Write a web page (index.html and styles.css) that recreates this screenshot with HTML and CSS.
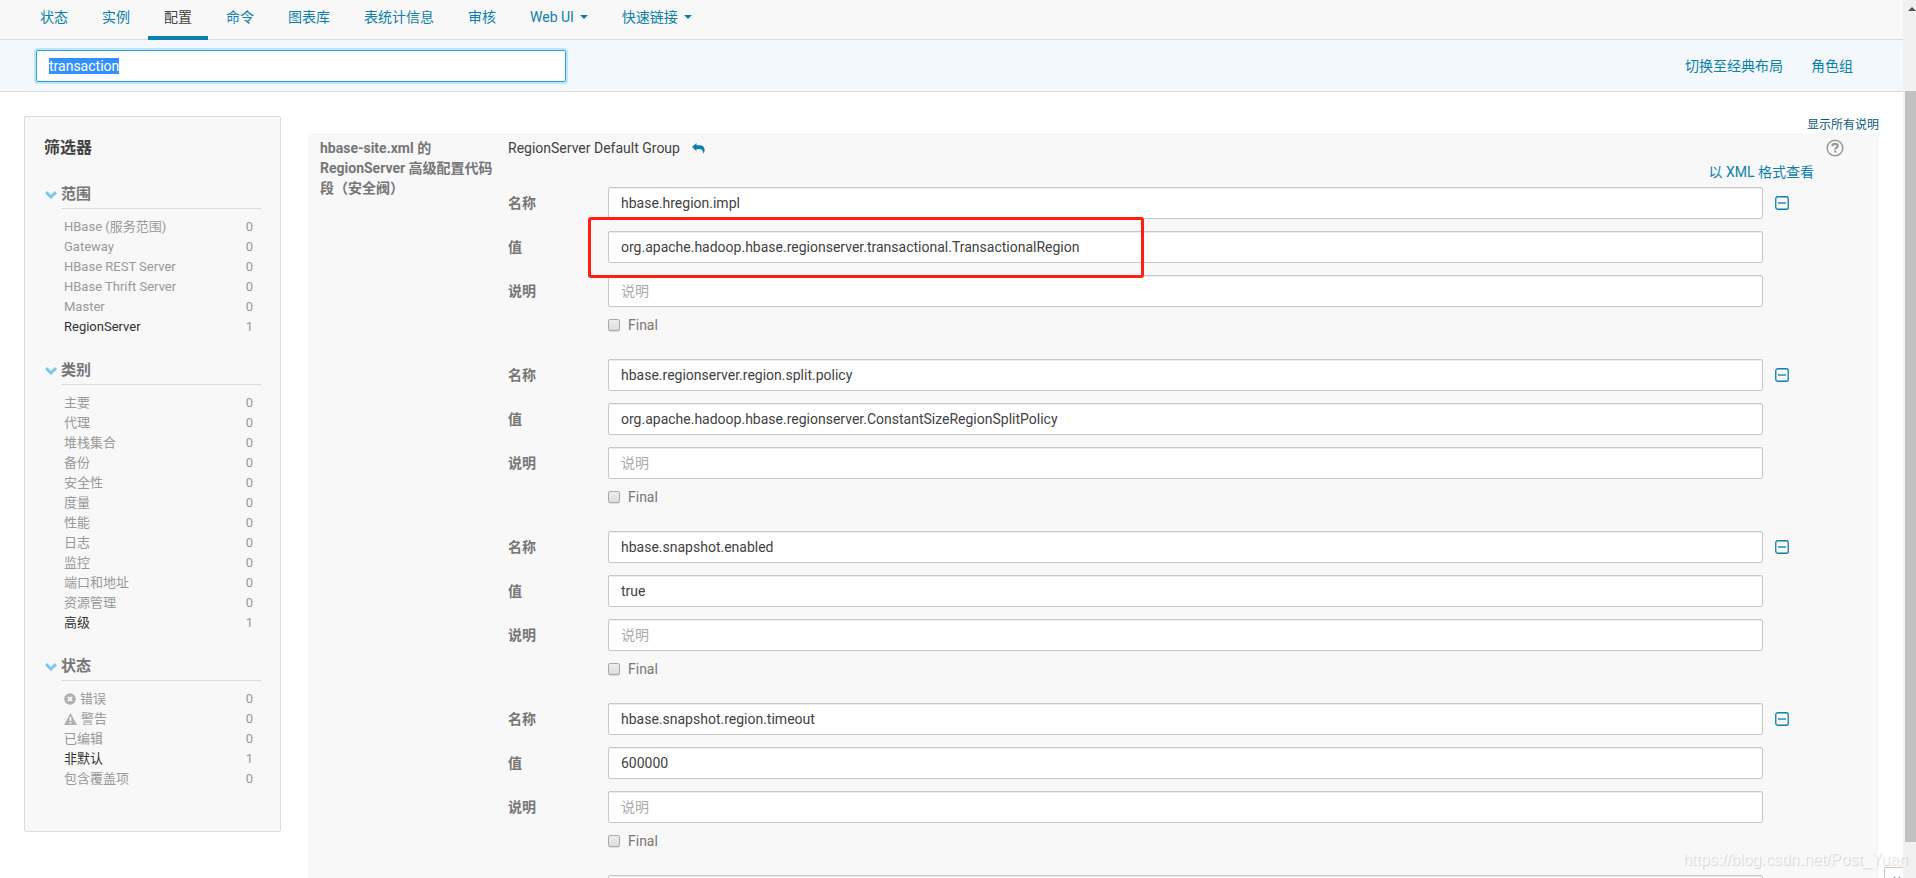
FILE: index.html
```html
<!DOCTYPE html>
<html lang="zh-CN">
<head>
<meta charset="utf-8">
<title>HBase 配置</title>
<link rel="stylesheet" href="styles.css">
</head>
<body>
<svg class="defs" aria-hidden="true">
  <symbol id="chevron" viewBox="0 0 12 8"><path d="M1 1.200 6 6 11 1.200" fill="none" stroke="#7cc7ea" stroke-width="3"/></symbol>
  <symbol id="minus" viewBox="0 0 14 14"><rect x=".75" y=".75" width="12.500" height="12.500" rx="2" fill="none" stroke="#0b7fad" stroke-width="1.300"/><path d="M3 7h8" stroke="#0b7fad" stroke-width="1.300"/></symbol>
</svg>
<div class="page">
  <div class="view">
    <nav class="tabs">
      <a href="#">状态</a>
      <a href="#">实例</a>
      <a href="#" class="active">配置</a>
      <a href="#">命令</a>
      <a href="#">图表库</a>
      <a href="#">表统计信息</a>
      <a href="#">审核</a>
      <a href="#">Web UI<span class="caret"></span></a>
      <a href="#">快速链接<span class="caret"></span></a>
    </nav>
    <div class="searchbar">
      <div class="search">
        <input id="q" class="search-input" type="text" value="transaction" aria-label="搜索">
      </div>
      <div class="links">
        <a href="#">切换至经典布局</a>
        <a href="#">角色组</a>
      </div>
    </div>
    <main class="content">
      <aside class="filters">
        <h2>筛选器</h2>
        <section>
          <h3><svg class="chev"><use href="#chevron"/></svg><span>范围</span></h3>
          <ul>
            <li><span>HBase (服务范围)</span><b>0</b></li>
            <li><span>Gateway</span><b>0</b></li>
            <li><span>HBase REST Server</span><b>0</b></li>
            <li><span>HBase Thrift Server</span><b>0</b></li>
            <li><span>Master</span><b>0</b></li>
            <li class="on"><span>RegionServer</span><b>1</b></li>
          </ul>
        </section>
        <section>
          <h3><svg class="chev"><use href="#chevron"/></svg><span>类别</span></h3>
          <ul>
            <li><span>主要</span><b>0</b></li>
            <li><span>代理</span><b>0</b></li>
            <li><span>堆栈集合</span><b>0</b></li>
            <li><span>备份</span><b>0</b></li>
            <li><span>安全性</span><b>0</b></li>
            <li><span>度量</span><b>0</b></li>
            <li><span>性能</span><b>0</b></li>
            <li><span>日志</span><b>0</b></li>
            <li><span>监控</span><b>0</b></li>
            <li><span>端口和地址</span><b>0</b></li>
            <li><span>资源管理</span><b>0</b></li>
            <li class="on"><span>高级</span><b>1</b></li>
          </ul>
        </section>
        <section>
          <h3><svg class="chev"><use href="#chevron"/></svg><span>状态</span></h3>
          <ul>
            <li><span class="ic"><svg width="12" height="12" viewBox="0 0 12 12"><circle cx="6" cy="6" r="5.800" fill="#b0b0b0"/><path d="M3.900 3.900 8.100 8.100M8.100 3.900 3.900 8.100" stroke="#f8f8f8" stroke-width="1.900"/></svg>错误</span><b>0</b></li>
            <li><span class="ic"><svg width="13" height="12" viewBox="0 0 14 12" preserveAspectRatio="none"><path d="M7 0 14 12H0z" fill="#b0b0b0"/><path d="M7 4v4M7 9v1.700" stroke="#f8f8f8" stroke-width="1.800"/></svg>警告</span><b>0</b></li>
            <li><span>已编辑</span><b>0</b></li>
            <li class="on"><span>非默认</span><b>1</b></li>
            <li><span>包含覆盖项</span><b>0</b></li>
          </ul>
        </section>
      </aside>
      <div class="main">
        <div class="showall"><a href="#">显示所有说明</a></div>
        <div class="panel">
          <div class="prop-name">hbase-site.xml 的 RegionServer 高级配置代码段（安全阀）</div>
          <div class="prop-body">
            <div class="group-head">
              <span>RegionServer Default Group</span>
              <button class="icon-btn" type="button" aria-label="重置"><svg width="13" height="11" viewBox="0 0 13 11"><path d="M0 4 4.500 0V2.300H7.500C11 2.300 12.600 4.500 12.600 7c0 1.500-.5 2.700-1.200 3.800C11.300 7.500 10 5.900 7.500 5.900H4.500V8.200z" fill="#0b7fad"/></svg></button>
              <span class="help"><svg width="18" height="18" viewBox="0 0 18 18"><circle cx="9" cy="9" r="7.800" fill="none" stroke="#999" stroke-width="1.500"/><path d="M6.300 7.200C6.500 5.500 7.500 4.900 9 4.900c1.600 0 2.700.8 2.700 2.200 0 1.700-2.500 1.800-2.500 3.300M9.200 11.500v2" fill="none" stroke="#999" stroke-width="2.200"/></svg></span>
            </div>
            <div class="xml"><a href="#">以 XML 格式查看</a></div>
            <div class="entries">
              <div class="entry">
                <label for="n1">名称</label><input id="n1" type="text" value="hbase.hregion.impl"><button class="icon-btn minus" type="button" aria-label="删除"><svg width="14" height="14"><use href="#minus"/></svg></button>
                <label for="v1">值</label><div class="marked"><input id="v1" type="text" value="org.apache.hadoop.hbase.regionserver.transactional.TransactionalRegion"><span class="mark"></span></div>
                <label for="d1">说明</label><input id="d1" type="text" placeholder="说明">
                <label class="final"><input type="checkbox">Final</label>
              </div>
              <div class="entry">
                <label for="n2">名称</label><input id="n2" type="text" value="hbase.regionserver.region.split.policy"><button class="icon-btn minus" type="button" aria-label="删除"><svg width="14" height="14"><use href="#minus"/></svg></button>
                <label for="v2">值</label><input id="v2" type="text" value="org.apache.hadoop.hbase.regionserver.ConstantSizeRegionSplitPolicy">
                <label for="d2">说明</label><input id="d2" type="text" placeholder="说明">
                <label class="final"><input type="checkbox">Final</label>
              </div>
              <div class="entry">
                <label for="n3">名称</label><input id="n3" type="text" value="hbase.snapshot.enabled"><button class="icon-btn minus" type="button" aria-label="删除"><svg width="14" height="14"><use href="#minus"/></svg></button>
                <label for="v3">值</label><input id="v3" type="text" value="true">
                <label for="d3">说明</label><input id="d3" type="text" placeholder="说明">
                <label class="final"><input type="checkbox">Final</label>
              </div>
              <div class="entry">
                <label for="n4">名称</label><input id="n4" type="text" value="hbase.snapshot.region.timeout"><button class="icon-btn minus" type="button" aria-label="删除"><svg width="14" height="14"><use href="#minus"/></svg></button>
                <label for="v4">值</label><input id="v4" type="text" value="600000">
                <label for="d4">说明</label><input id="d4" type="text" placeholder="说明">
                <label class="final"><input type="checkbox">Final</label>
              </div>
              <div class="entry">
                <input type="text" aria-label="名称">
              </div>
            </div>
          </div>
        </div>
      </div>
    </main>
    <button class="corner" type="button" aria-label="展开"><svg width="10" height="8" viewBox="0 0 10 8"><path d="M1 0 4 4 1 8M6 0 9 4 6 8" fill="none" stroke="#5b8db8" stroke-width="1.500"/></svg></button>
  </div>
  <div class="scrollbar"><svg width="8" height="5" viewBox="0 0 8 5"><path d="M0 5 4 1 8 5z" fill="#505050"/></svg><div class="thumb"></div></div>
  <div class="watermark">https://blog.csdn.net/Post_Yuan</div>
</div>
<script src="app.js"></script>
</body>
</html>
```
FILE: styles.css
```css
* { box-sizing: border-box; }
body {
  margin: 0;
  font: 14px/20px Roboto, "Noto Sans CJK SC", sans-serif;
  color: #424242;
  background: #fff;
}
a { color: #0b7fad; text-decoration: none; }
.defs { display: none; }
svg { display: block; }
.page { position: relative; display: flex; height: 100vh; overflow: hidden; }
.view { position: relative; flex: 1; min-width: 0; overflow: hidden; }

.tabs {
  display: flex;
  gap: 2px;
  height: 40px;
  padding: 0 24px;
  background: #f8f8f8;
  border-bottom: 1px solid #dcdcdc;
}
.tabs a { display: flex; align-items: center; height: 40px; padding: 0 16px 2px; border-bottom: 4px solid transparent; }
.tabs a.active { color: #424242; border-color: #0b7fad; }
.caret { margin-left: 6px; border: 4px solid transparent; border-top-color: #0b7fad; border-bottom: 0; }

.searchbar {
  display: flex;
  align-items: center;
  justify-content: space-between;
  height: 52px;
  padding: 0 50px 0 36px;
  background: #f3f8fc;
  border-bottom: 1px solid #dcdcdc;
}
.search { flex: 0 0 530px; }
.links { display: flex; gap: 28px; }
input[type="text"] {
  width: 100%;
  min-width: 0;
  height: 32px;
  padding: 0 12px;
  font: inherit;
  color: #424242;
  background: #fff;
  border: 1px solid #c8c8c8;
  border-radius: 2px;
  box-shadow: inset 0 1px 1px rgba(0, 0, 0, .08);
  outline: 0;
}
input[type="text"].search-input { display: block; border-color: #2ba4dc; box-shadow: 0 0 0 2px #bfe4f5; }
.search-input::selection { color: #fff; background: #3390ff; }
input::placeholder { color: #aaa; opacity: 1; }

.content { display: flex; align-items: flex-start; gap: 27px; padding: 24px 24px 0; }
.filters {
  flex: 0 0 257px;
  padding: 21px 19px 22px;
  background: #f8f8f8;
  border: 1px solid #dcdcdc;
  border-radius: 2px;
}
.filters h2 { margin: 0 0 23px; font-size: 16px; line-height: 20px; }
.filters section { margin-bottom: 20px; }
.filters h3 { display: flex; align-items: center; margin: 0 0 8px; font-size: 15px; line-height: 27px; color: #767676; }
.filters h3 span { flex: 1; border-bottom: 1px solid #dcdcdc; }
.chev { width: 12px; height: 8px; margin: 0 4px 0 1px; }
.filters ul { margin: 0; padding: 0 8px 0 20px; list-style: none; font-size: 13px; color: #999; }
.filters li { display: flex; justify-content: space-between; height: 20px; }
.filters b { font-weight: 400; }
.filters .on span { color: #333; }
.ic { display: flex; align-items: center; gap: 4px; }

.main { flex: 1; min-width: 0; }
.showall { height: 17px; font-size: 12px; line-height: 18px; text-align: right; }
.showall a { color: #0b5a7d; }
.panel { display: flex; gap: 12px; padding: 5px 12px 20px; background: #f8f8f8; }
.prop-name { flex: 0 0 176px; font-weight: 700; color: #767676; }
.prop-body { flex: 1; min-width: 0; }
.group-head { display: flex; align-items: center; height: 20px; gap: 12px; }
.icon-btn { padding: 0; background: none; border: 0; }
.help { margin-left: auto; padding-right: 23px; }
.xml { padding: 4px 53px 0 0; text-align: right; }
.entries { display: grid; gap: 28px; margin-top: 5px; }
.entry { display: grid; grid-template-columns: 88px minmax(0, 1fr) 14px; gap: 12px; padding-right: 78px; }
.entry > label { grid-column: 1; font-weight: 700; line-height: 32px; color: #767676; }
.entry > input, .marked { grid-column: 2; }
.minus { align-self: center; grid-column: 3; }
.marked { position: relative; }
.marked input { display: block; }
.mark {
  position: absolute;
  left: -20px;
  top: -14px;
  width: 556px;
  height: 61px;
  border: 3px solid #ff1e10;
  border-radius: 3px;
}
.entry > .final { grid-column: 2; display: flex; align-items: center; gap: 8px; height: 12px; font-weight: 400; line-height: 12px; }
.final input {
  appearance: none;
  width: 12px;
  height: 12px;
  margin: 0;
  background: linear-gradient(#eee, #dcdcdc);
  border: 1px solid #aaa;
  border-radius: 2px;
  box-shadow: 0 1px 1px rgba(0, 0, 0, .1);
}

.corner {
  position: absolute;
  right: -6px;
  bottom: -9px;
  width: 25px;
  height: 20px;
  padding: 8px 0 0 8px;
  background: #fff;
  border: 1px solid #c8c8c8;
  border-radius: 2px;
}
.scrollbar { flex: 0 0 13px; padding: 6px 0 0 2px; background: #f1f1f1; }
.scrollbar svg { margin-left: 3px; }
.thumb { height: calc(100vh - 127px); margin-top: 80px; background: #c1c1c1; }
.watermark {
  position: absolute;
  right: 8px;
  bottom: 8px;
  font: 16px/20px "Liberation Sans", sans-serif;
  color: rgba(255, 255, 255, .7);
  text-shadow: 1px 1px 1px rgba(0, 0, 0, .15);
}
```
FILE: app.js
```js
const q = document.getElementById("q");
q.focus();
q.select();
```
